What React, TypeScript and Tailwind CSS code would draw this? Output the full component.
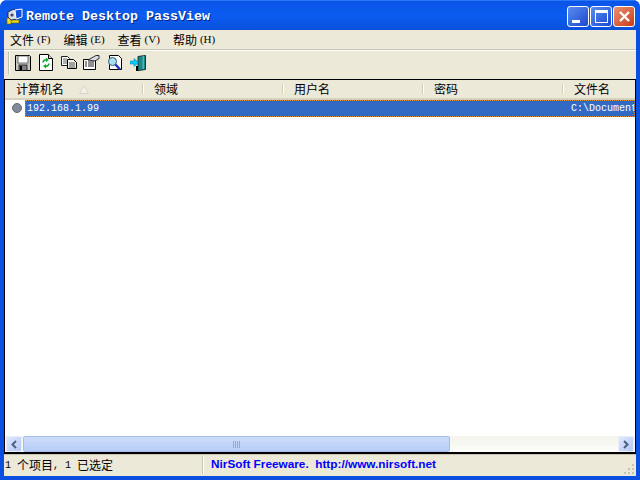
import React from "react";

const cjk = { fontFamily: '"Noto Sans CJK SC","Liberation Sans",sans-serif' };
const mono = { fontFamily: '"Liberation Mono",monospace' };
const serif = { fontFamily: '"Liberation Serif",serif' };

function AppIcon() {
  return (
    <svg width="17" height="17" viewBox="0 0 17 17" className="shrink-0">
      <rect x="1" y="12" width="12" height="3" fill="#e8d820" stroke="#6a5a00" strokeWidth="0.6" />
      <rect x="1" y="10" width="4" height="6" fill="#f0e020" stroke="#6a5a00" strokeWidth="0.6" />
      <path d="M2 4 L8 1 L11 5 L11 11 L5 12 L2 9Z" fill="#d8dce8" stroke="#101830" strokeWidth="0.8" />
      <path d="M9 2 L16 1 L16 9 L10 11Z" fill="#1050e0" stroke="#fff" strokeWidth="1" />
      <circle cx="6" cy="7" r="1.6" fill="#404860" />
    </svg>
  );
}

function Tool({ children }: { children: React.ReactNode }) {
  return <div className="w-[23px] h-[22px] flex items-center justify-center">{children}</div>;
}

function Save() {
  return (
    <svg width="16" height="16" viewBox="0 0 16 16">
      <path d="M.5.5h14l1 1v14H.5z" fill="#c8c8c0" stroke="#000" />
      <rect x="3" y="1" width="10" height="7" fill="#fff" stroke="#404040" strokeWidth="0.7" />
      <rect x="4" y="10" width="8" height="5.5" fill="#808080" stroke="#000" strokeWidth="0.7" />
      <rect x="5" y="11" width="2" height="4" fill="#000" />
    </svg>
  );
}
function Refresh() {
  return (
    <svg width="14" height="17" viewBox="0 0 14 17">
      <path d="M.5.5h9l4 4v12H.5z" fill="#fff" stroke="#000" />
      <path d="M9.500.5v4h4" fill="#d8d8d8" stroke="#000" />
      <path d="M4 8.500a3 3 0 0 1 4-2.500" fill="none" stroke="#10a830" strokeWidth="1.600" />
      <path d="M7 3.500l3 2.500-3 2z" fill="#10a830" />
      <path d="M10 9.500a3 3 0 0 1-4 2.500" fill="none" stroke="#10a830" strokeWidth="1.600" />
      <path d="M7 14.500l-3-2.500 3-2z" fill="#10a830" />
    </svg>
  );
}
function Copy() {
  return (
    <svg width="16" height="13" viewBox="0 0 16 13">
      <path d="M.5.5h6l2 2v7H.5z" fill="#fff" stroke="#202020" />
      <path d="M2 3h4M2 5h4M2 7h4" stroke="#606060" />
      <path d="M6.500 3.500h6l3 3v6h-9z" fill="#f0f0e8" stroke="#000" />
      <path d="M8 7h6M8 9h6M8 11h6" stroke="#505050" />
    </svg>
  );
}
function Props() {
  return (
    <svg width="17" height="15" viewBox="0 0 17 15">
      <path d="M.5 4.500h12v10H.5z" fill="#fff" stroke="#000" />
      <path d="M2 7h2M5 7h6M2 9h2M5 9h6M2 11h2M5 11h6" stroke="#202020" />
      <path d="M5 5 L13 .5 h3 v3 L12 6z" fill="#d8dce8" stroke="#000" strokeWidth="0.8" />
    </svg>
  );
}
function Find() {
  return (
    <svg width="15" height="16" viewBox="0 0 15 16">
      <path d="M2.500.5h9l3 3v11h-12z" fill="#fff" stroke="#000" />
      <circle cx="5.500" cy="6.500" r="4" fill="#a8e0f0" stroke="#305878" />
      <path d="M8.500 9.500l4.500 5" stroke="#2030c0" strokeWidth="2.400" />
    </svg>
  );
}
function Exit() {
  return (
    <svg width="16" height="16" viewBox="0 0 16 16">
      <path d="M8 1.500L15.500.5v14L8 15.500z" fill="#188888" stroke="#083838" />
      <rect x="12.500" y="1" width="1.500" height="13" fill="#60b0b0" />
      <path d="M0 6h4V3.500L8.500 7.500 4 11.500V9H0z" fill="#10c8f0" stroke="#0870a0" strokeWidth="0.5" />
      <rect x="6" y="11" width="2" height="5" fill="#000" />
    </svg>
  );
}

function Head({ w, children, first }: { w: string; children: React.ReactNode; first?: boolean }) {
  return (
    <div className={`${w} ${first ? "pl-[11px]" : "pl-[10px]"} shrink-0 h-full relative flex items-center text-[12px] text-black`} style={cjk}>
      <span>{children}</span>
      {first && (
        <svg width="10" height="9" viewBox="0 0 10 9" className="ml-[15px]">
          <path d="M5 .5L.5 8.500h9z" fill="#f4f2e8" stroke="#d8d4c4" />
        </svg>
      )}
      <span className="absolute right-0 top-[4px] bottom-[4px] w-[2px] border-l border-[#d0ccb8] border-r-white border-r bg-transparent" />
    </div>
  );
}

function Menu({ name, k }: { name: string; k: string }) {
  return (
    <span className="flex items-center">
      <span style={cjk}>{name}</span>
      <span className="ml-[3px] text-[11px]" style={serif}>({k})</span>
    </span>
  );
}

export default function App() {
  return (
    <div className="w-[640px] h-[480px] overflow-hidden flex flex-col bg-[#0a4fe0] rounded-t-[7px]">
      <div className="h-[30px] shrink-0 flex items-center pl-[6px] pr-[5px] pt-[2px] bg-gradient-to-b from-[#0a55e8] via-[#0b5cf0] to-[#0a50dc] border-t border-[#2a78f8]">
        <AppIcon />
        <span
          className="ml-[3px] text-white text-[13.33px] font-bold [text-shadow:1px_1px_0_#0f1f80] whitespace-pre"
          style={mono}
        >
          Remote Desktop PassView
        </span>
        <div className="ml-auto flex gap-[1px]">
          <div className="w-[22px] h-[21px] rounded-[3px] border border-white bg-gradient-to-br from-[#5a8cf0] to-[#1c48d0] relative">
            <span className="absolute left-[4px] bottom-[3px] w-[8px] h-[3px] bg-white" />
          </div>
          <div className="w-[22px] h-[21px] rounded-[3px] border border-white bg-gradient-to-br from-[#5a8cf0] to-[#1c48d0] flex items-center justify-center">
            <span className="w-[13px] h-[13px] border border-white border-t-[3px]" />
          </div>
          <div className="w-[22px] h-[21px] rounded-[3px] border border-white bg-gradient-to-br from-[#e89070] to-[#c83810] flex items-center justify-center">
            <svg width="13" height="13" viewBox="0 0 13 13">
              <path d="M2 2l9 9M11 2l-9 9" stroke="#fff" strokeWidth="2.400" />
            </svg>
          </div>
        </div>
      </div>

      <div className="flex-1 min-h-0 mx-[4px] mb-[4px] flex flex-col bg-[#ece9d8]">
        <div className="h-[20px] shrink-0 flex items-center pl-[6px] gap-[13px] text-[12px] text-black border-b border-[#c8c4b4]">
          <Menu name="文件" k="F" />
          <Menu name="编辑" k="E" />
          <Menu name="查看" k="V" />
          <Menu name="帮助" k="H" />
        </div>
        <div className="h-[29px] shrink-0 flex items-center pl-[4px] pb-[5px] border-t border-white">
          <span className="w-[2px] h-[22px] border-l border-[#c0bcac] border-r border-r-white" />
          <div className="flex items-center pl-[1px]">
            <Tool><Save /></Tool>
            <Tool><Refresh /></Tool>
            <Tool><Copy /></Tool>
            <Tool><Props /></Tool>
            <Tool><Find /></Tool>
            <Tool><Exit /></Tool>
          </div>
        </div>

        <div className="flex-1 min-h-0 flex flex-col bg-white border-t border-l border-r border-black border-b-2 border-b-black overflow-hidden relative">
          <div className="h-[20px] shrink-0 flex bg-[#ece9d8] border-b-[2px] border-b-[#d6d2c0]">
            <Head w="w-[139px]" first>计算机名</Head>
            <Head w="w-[140px]">领域</Head>
            <Head w="w-[140px]">用户名</Head>
            <Head w="w-[140px]">密码</Head>
            <Head w="w-[140px]">文件名</Head>
          </div>
          <div className="flex-1 min-h-0">
            <div className="h-[17px] flex items-center relative">
              <span className="absolute left-[7px] top-[3px] w-[10px] h-[10px] rounded-full bg-[#808a9c] border border-[#686868]" />
              <div
                className="ml-[20px] flex-1 h-[17px] bg-[#316ac5] border border-dotted border-[#d89030] flex items-center text-white text-[10px] whitespace-pre relative overflow-hidden"
                style={mono}
              >
                <span className="pl-[1px]">192.168.1.99</span>
                <span className="absolute left-[545px]">C:\Document</span>
              </div>
            </div>
          </div>
          <div className="h-[16px] shrink-0 flex bg-gradient-to-b from-[#f4f3ec] to-[#fdfdfa] px-[1px]">
            <div className="w-[16px] h-[16px] rounded-[2px] border border-[#e8eefc] bg-gradient-to-br from-[#e0e8fc] to-[#b4c8f4] flex items-center justify-center">
              <svg width="8" height="9" viewBox="0 0 8 9"><path d="M6 1L2.500 4.500 6 8" fill="none" stroke="#4d6185" strokeWidth="2" /></svg>
            </div>
            <div className="w-[427px] h-[16px] ml-[1px] rounded-[2px] border border-[#a8bce8] bg-gradient-to-b from-[#cddcfb] to-[#b8cdf7] flex items-center justify-center gap-[1px]">
              <span className="w-[1px] h-[7px] bg-[#8ca8e0]" />
              <span className="w-[1px] h-[7px] bg-[#8ca8e0]" />
              <span className="w-[1px] h-[7px] bg-[#8ca8e0]" />
              <span className="w-[1px] h-[7px] bg-[#8ca8e0]" />
            </div>
            <div className="flex-1" />
            <div className="w-[16px] h-[16px] rounded-[2px] border border-[#e8eefc] bg-gradient-to-br from-[#e0e8fc] to-[#b4c8f4] flex items-center justify-center">
              <svg width="8" height="9" viewBox="0 0 8 9"><path d="M2 1l3.500 3.500L2 8" fill="none" stroke="#4d6185" strokeWidth="2" /></svg>
            </div>
          </div>
        </div>

        <div className="h-[22px] shrink-0 flex items-center pb-[2px] text-[12px] relative border-t border-[#c8c4b4]">
          <span className="w-[198px] pl-[1px] text-black whitespace-pre flex items-center" style={cjk}>
            <span className="text-[10px] mt-[2px] whitespace-pre" style={mono}>1 </span>
            <span>个项目</span>
            <span className="text-[10px] mt-[2px] whitespace-pre" style={mono}>, 1 </span>
            <span>已选定</span>
          </span>
          <span className="w-[2px] h-[18px] border-l border-[#c8c4b4] border-r border-r-white" />
          <span className="ml-[7px] text-[#0000ff] font-bold text-[11.800px] whitespace-pre" style={{ fontFamily: '"Liberation Sans",sans-serif' }}>NirSoft Freeware.  http://www.nirsoft.net</span>
          <svg width="12" height="12" viewBox="0 0 12 12" className="absolute right-[1px] bottom-[1px]">
            <path d="M9 1h2v2H9zM5 5h2v2H5zM9 5h2v2H9zM1 9h2v2H1zM5 9h2v2H5zM9 9h2v2H9z" fill="#c8c4b0" />
          </svg>
        </div>
      </div>
    </div>
  );
}
